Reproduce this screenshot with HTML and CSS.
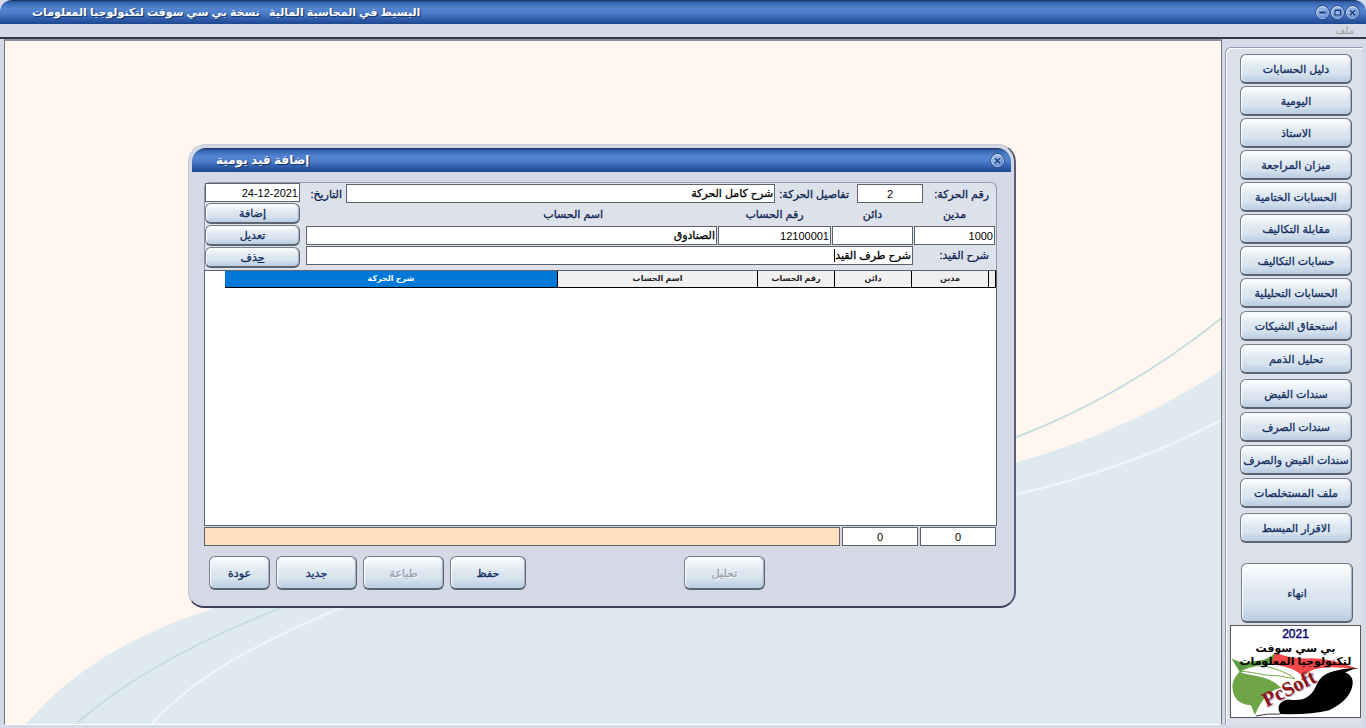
FILE: index.html
```html
<!DOCTYPE html>
<html lang="ar" dir="rtl">

<head>
    <meta charset="utf-8">
    <title>البسيط في المحاسبة المالية</title>
    <link rel="stylesheet" href="styles.css">
</head>

<body>
    <!-- window icons -->
    <svg class="defs">
        <defs>
            <symbol id="orb" viewBox="0 0 15 15">
                <circle cx="7.5" cy="7.5" r="7.2" fill="#24437e" />
                <circle cx="7.5" cy="7.5" r="6.4" fill="#cfdff7" />
                <circle cx="7.8" cy="8" r="5.6" fill="#7298d8" />
                <circle cx="7" cy="6.6" r="4" fill="#94b4e6" />
            </symbol>
            <symbol id="close" viewBox="0 0 15 15">
                <use href="#orb" />
                <path d="M5 5.2l5 5M10 5.2l-5 5" stroke="#1b3a78" stroke-width="1.4" />
            </symbol>
            <symbol id="max" viewBox="0 0 15 15">
                <use href="#orb" />
                <path d="M5 5.5h5.5v4.5H5zM5 5h5.5" fill="none" stroke="#1b3a78" stroke-width="1.2" />
            </symbol>
            <symbol id="min" viewBox="0 0 15 15">
                <use href="#orb" />
                <path d="M4.5 7.5h6" stroke="#1b3a78" stroke-width="2" />
            </symbol>
        </defs>
    </svg>

    <header class="titlebar">
        <div class="controls">
            <button class="ctl" aria-label="إغلاق"><svg><use href="#close" /></svg></button>
            <button class="ctl" aria-label="تكبير"><svg><use href="#max" /></svg></button>
            <button class="ctl" aria-label="تصغير"><svg><use href="#min" /></svg></button>
        </div>
        <h1 class="title">البسيط في المحاسبة المالية &nbsp; نسخة بي سي سوفت لتكنولوجيا المعلومات</h1>
    </header>
    <nav class="menubar"><button class="menu">ملف</button></nav>

    <div class="main">
        <aside class="sidebar">
            <div class="group">
                <button class="btn">دليل الحسابات</button>
                <button class="btn">اليومية</button>
                <button class="btn">الاستاذ</button>
                <button class="btn">ميزان المراجعة</button>
                <button class="btn">الحسابات الختامية</button>
                <button class="btn">مقابلة التكاليف</button>
                <button class="btn">حسابات التكاليف</button>
            </div>
            <div class="group loose">
                <button class="btn">الحسابات التحليلية</button>
                <button class="btn">استحقاق الشيكات</button>
                <button class="btn">تحليل الذمم</button>
            </div>
            <div class="group loose">
                <button class="btn">سندات القبض</button>
                <button class="btn">سندات الصرف</button>
                <button class="btn">سندات القبض والصرف</button>
                <button class="btn">ملف المستخلصات</button>
            </div>
            <div class="group">
                <button class="btn">الاقرار المبسط</button>
            </div>
            <button class="btn exit">انهاء</button>
            <div class="logo">
                <svg class="logo-art" viewBox="0 0 131 93">
                    <path d="M0 33 L8 47 Q16 50 26 51 Q42 54 51 63 Q34 66 24 91 L20 81 Q2 80 1 62 Q1 54 8 47 Z" fill="#6fa546" />
                    <path d="M45 27 Q60 34 83 33 Q102 33 130 44 Q101 41 92 43 Q78 44 74 53 Q65 41 38 39 Z" fill="#f04848" />
                    <path d="M0 33 Q12 40 22 36 Q37 36 45 27 L40 40 Q23 38 9 48 Z" fill="#5c9a40" />
                    <path d="M9 46 Q26 37 42 43 Q58 48 65 54 Q48 50 34 50 Q20 47 9 46 Z" fill="#fff" stroke="#6fa546" />
                    <path d="M50 90 Q44 78 58 75 Q80 79 87 60 Q93 47 108 46 Q124 47 124 58 Q123 75 100 86 Q80 91 50 90 Z" fill="#000" />
                    <path d="M100 48 Q112 43 130 43 Q120 45 114 49 Z" fill="#000" />
                    <path d="M25 92 Q37 89 50 90" fill="none" stroke="#333" />
                    <text class="brand shade" x="37" y="84" direction="ltr" transform="rotate(-27 37 84)">PcSoft</text>
                    <text class="brand" x="36" y="83" direction="ltr" transform="rotate(-27 36 83)">PcSoft</text>
                </svg>
                <div class="logo-text">
                    <span class="year">2021</span>
                    <b>بي سي سوفت</b>
                    <b>لتكنولوجيا المعلومات</b>
                </div>
            </div>
        </aside>

        <main class="desktop">
            <svg class="waves" viewBox="0 0 1216 684" preserveAspectRatio="none">
                <path d="M21 684 C70 627 130 595 200 571 C420 460 800 500 1011 422 Q1120 392 1216 330 V684Z" fill="#dfeaf0" />
                <path d="M71 684 C120 640 190 602 275 568 C480 500 800 490 1011 397 Q1120 355 1216 278" fill="none" stroke="#c5dedd" stroke-width="2" />
                <path d="M147 684 C190 635 250 605 330 570 C520 510 800 510 1011 454 Q1120 430 1216 380" fill="none" stroke="#f0f6f8" stroke-width="2" />
            </svg>

            <section class="dialog" aria-labelledby="dlg-title">
                <header class="titlebar dialog-title">
                    <button class="ctl" aria-label="إغلاق"><svg><use href="#close" /></svg></button>
                    <h2 class="title" id="dlg-title">إضافة قيد يومية</h2>
                </header>

                <form class="dialog-body">
                    <div class="entry">
                        <div class="fields">
                            <div class="row head">
                                <label class="lbl-no" for="no">رقم الحركة:</label>
                                <input class="no center" id="no" value="2">
                                <label class="lbl-det" for="details">تفاصيل الحركة:</label>
                                <input class="grow" id="details" value="شرح كامل الحركة">
                                <label class="lbl-date" for="date">التاريخ:</label>
                            </div>
                            <div class="row amounts">
                                <div class="field debit"><label for="debit">مدين</label><input class="num" id="debit" value="1000"></div>
                                <div class="field credit"><label for="credit">دائن</label><input class="num" id="credit"></div>
                                <div class="field accno"><label for="accno">رقم الحساب</label><input class="num" id="accno" value="12100001"></div>
                                <div class="field accname grow"><label for="accname">اسم الحساب</label><input id="accname" value="الصنادوق"></div>
                            </div>
                            <div class="row">
                                <label class="lbl-note" for="note">شرح القيد:</label>
                                <span class="box grow"><input id="note" value="شرح طرف القيد"><i class="caret"></i></span>
                            </div>
                        </div>
                        <div class="side">
                            <input class="num" id="date" value="24-12-2021">
                            <button type="button" class="btn">إضافة</button>
                            <button type="button" class="btn">تعديل</button>
                            <button type="button" class="btn"><u>ح</u>ذف</button>
                        </div>
                    </div>

                    <div class="grid">
                        <table>
                            <thead>
                                <tr>
                                    <th class="c-mark"></th>
                                    <th class="c-num">مدين</th>
                                    <th class="c-num">دائن</th>
                                    <th class="c-num">رقم الحساب</th>
                                    <th class="c-name">اسم الحساب</th>
                                    <th class="selected">شرح الحركة</th>
                                </tr>
                            </thead>
                        </table>
                    </div>

                    <div class="totals">
                        <input class="sum center" value="0" aria-label="مجموع المدين">
                        <input class="sum center" value="0" aria-label="مجموع الدائن">
                        <div class="status"></div>
                    </div>

                    <div class="actions">
                        <button type="button" class="btn w-mid" disabled>تحليل</button>
                        <div class="right-set">
                            <button type="button" class="btn w-save">حفظ</button>
                            <button type="button" class="btn w-mid" disabled>طباعة</button>
                            <button type="button" class="btn w-mid">جديد</button>
                            <button type="button" class="btn w-back">عودة</button>
                        </div>
                    </div>
                </form>
            </section>
        </main>
    </div>
</body>

</html>
```
FILE: styles.css
```css
* {
    box-sizing: border-box;
}

body {
    margin: 0;
    min-height: 100vh;
    display: flex;
    flex-direction: column;
    background: #d6dae6;
    font: 11px/16px "Liberation Sans", "DejaVu Sans", sans-serif;
    color: #0d2450;
}

input,
button {
    font: inherit;
}

.defs {
    position: absolute;
    width: 0;
    height: 0;
}

/* title bars */
.titlebar {
    display: flex;
    justify-content: space-between;
    align-items: center;
    height: 24px;
    padding: 0 6px 0 32px;
    background: linear-gradient(#16305f, #3563ae 10%, #5384d0 35%, #4e7dca 55%, #3563b0 75%, #1d4790);
    border-radius: 12px 12px 0 0;
}

.title {
    margin: 0;
    font-size: 11px;
    line-height: 20px;
    font-weight: bold;
    color: #fff;
    text-shadow: 1px 1px 1px #14305f;
}

.controls {
    display: flex;
}

.ctl {
    width: 15px;
    height: 15px;
    padding: 0;
    border: 0;
    background: none;
}

.ctl svg {
    display: block;
    width: 15px;
    height: 15px;
}

.menubar {
    height: 15px;
    padding: 0 12px;
    border-bottom: 2px solid #35364c;
    display: flex;
}

.menu {
    padding: 0;
    border: 0;
    background: none;
    font-size: 10px;
    line-height: 14px;
    color: #a09a98;
}

.main {
    flex: 1;
    display: flex;
    padding: 0 4px 3px 4px;
}

/* glossy buttons */
.btn {
    padding: 0 2px;
    border: 1px solid #777f8c;
    border-right-color: #5d6470;
    border-bottom: 2px solid #5d6470;
    border-radius: 6px;
    background: linear-gradient(#fff, #f0f4f9 20%, #dce6f0 50%, #dbe5ef 65%, #b8cce2);
    box-shadow: inset 1px 0 1px #fff, inset -1px 0 1px #9fb0c6;
    color: #132e60;
    font-size: 11px;
    line-height: 16px;
    -webkit-text-stroke: 0.3px;
    white-space: nowrap;
}

.btn:disabled {
    color: #9aa2b2;
    text-shadow: 1px 1px 0 #fff;
}

/* sidebar */
.sidebar {
    width: 137px;
    margin: 8px 0 0 0;
    padding: 6px 0 2px;
    display: flex;
    flex-direction: column;
    border-top: 1px solid #8f98b4;
    border-left: 1px solid #8f98b4;
    border-radius: 6px 0 0 0;
    background: #dce0ea;
    box-shadow: inset 1px 1px #fff;
}

.sidebar .btn {
    width: 112px;
    height: 30px;
    margin-right: 10px;
}

.group {
    display: flex;
    flex-direction: column;
    gap: 2px;
    margin-bottom: 2px;
}

.loose {
    gap: 3px;
    margin-bottom: 5px;
}

.sidebar .exit {
    height: 60px;
    margin: 18px 9px 2px 0;
}

.logo {
    position: relative;
    width: 131px;
    height: 93px;
    margin-right: 1px;
    border: 1px solid #555;
    background: #fff;
}

.logo-art {
    position: absolute;
    inset: 0;
    width: 100%;
    height: 100%;
}

.logo-text {
    position: relative;
    text-align: center;
    color: #000;
    font-size: 11px;
    line-height: 13px;
}

.logo-text b,
.year {
    display: block;
    white-space: nowrap;
}

.year {
    font-size: 12px;
    line-height: 16px;
    color: #00006e;
    -webkit-text-stroke: 0.4px;
}

.brand {
    font: bold 21px "Liberation Serif", serif;
    fill: #8c1420;
    text-anchor: start;
}

.shade {
    fill: #b9a5a8;
}

/* desktop area */
.desktop {
    flex: 1;
    position: relative;
    margin-right: 3px;
    border: 1px solid #6f7388;
    border-top: 2px solid #8d90a0;
    border-bottom-color: #fff;
    background: #fff6f0;
    overflow: hidden;
}

.waves {
    position: absolute;
    inset: 0;
    width: 100%;
    height: 100%;
}

/* journal entry window */
.dialog {
    position: absolute;
    left: 183px;
    top: 103px;
    width: 828px;
    padding: 3px 3px 16px;
    background: #d5d9e5;
    border-radius: 18px 18px 16px 16px;
    border-right: 2px solid #5a5f78;
    border-bottom: 2px solid #3c405a;
    border-left: 1px solid #c3c8d6;
    border-top: 1px solid #c9ccd6;
}

.dialog-title {
    padding: 0 6px 0 24px;
    border-radius: 14px 14px 0 0;
}

.dialog-title .title {
    font-size: 12px;
}

.dialog-body {
    padding: 10px 14px 0 12px;
}

.entry {
    display: flex;
    gap: 6px;
    height: 88px;
    padding-right: 1px;
    border: 1px solid #8f98ac;
    border-bottom: 0;
    border-radius: 6px 6px 0 0;
    background: #dde1ea;
}

.fields {
    flex: 1;
    min-width: 0;
}

.row {
    display: flex;
    gap: 1px;
}

.grow {
    flex: 1;
    min-width: 0;
}

.dialog input {
    width: 100%;
    height: 19px;
    padding: 0 1px;
    border: 1px solid #5d636c;
    border-radius: 0;
    background: #fff;
    color: #000;
    font-size: 11px;
}

#details,
#accname,
#note {
    -webkit-text-stroke: 0.3px;
}

.dialog .num {
    direction: ltr;
    text-align: right;
}

.dialog .center {
    text-align: center;
}

.row label {
    white-space: nowrap;
    line-height: 20px;
    -webkit-text-stroke: 0.3px;
}

.head {
    align-items: center;
    height: 21px;
    gap: 4px;
}

.dialog .no {
    width: 66px;
    margin: 0 0 0 4px;
}

.dialog .head .grow {
    width: 0;
}

.lbl-no {
    width: 68px;
    padding-right: 6px;
}

.lbl-date {
    width: 36px;
}

.amounts {
    height: 41px;
}

.field {
    display: flex;
    flex-direction: column;
    justify-content: space-between;
    text-align: center;
}

.debit {
    width: 81px;
}

.credit {
    width: 81px;
}

.accno {
    width: 113px;
}

.accname label {
    width: 70%;
}

.lbl-note {
    width: 81px;
    padding-right: 6px;
}

.box {
    position: relative;
    margin-top: 1px;
}

.box .caret {
    position: absolute;
    right: 78px;
    top: 3px;
    height: 13px;
    border-left: 1px solid #000;
}

.side {
    width: 95px;
    display: flex;
    flex-direction: column;
    gap: 1px;
}

.side .btn {
    height: 21px;
    line-height: 15px;
}

/* entries table */
.grid {
    height: 256px;
    border: 1px solid #5d636c;
    background: #fff;
}

table {
    width: calc(100% - 20px);
    table-layout: fixed;
    border-collapse: collapse;
}

th {
    height: 16px;
    padding: 0;
    border: 1px solid #000;
    border-top: 0;
    background: #f0f0f0;
    color: #222;
    font-size: 8px;
    line-height: 14px;
}

.c-mark {
    width: 7px;
}

.c-num {
    width: 77px;
}

.c-name {
    width: 200px;
}

.selected {
    border-left: 0;
    background: #0078d7;
    color: #fff;
}

/* totals and action buttons */
.totals {
    display: flex;
    gap: 2px;
    margin-top: 1px;
    padding-right: 1px;
}

.dialog .sum {
    width: 76px;
}

.status {
    flex: 1;
    height: 19px;
    border: 1px solid #5d636c;
    background: #ffdfbf;
}

.actions {
    display: flex;
    justify-content: space-between;
    margin: 10px 0 0;
    padding: 0 232px 0 5px;
}

.actions .btn {
    height: 34px;
}

.right-set {
    display: flex;
    gap: 6px;
}

.w-mid {
    width: 81px;
}

.w-save {
    width: 76px;
}

.w-back {
    width: 61px;
}
```
